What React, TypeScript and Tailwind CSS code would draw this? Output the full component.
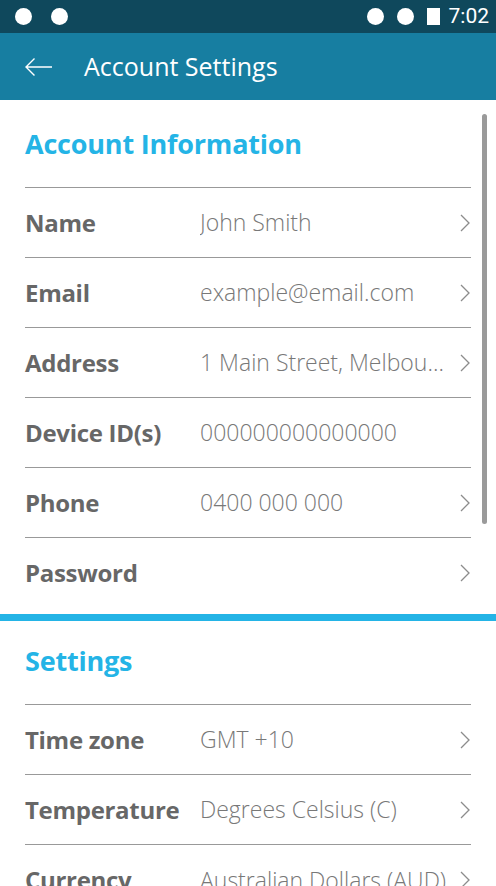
type Row = { label: string; value?: string; chevron?: boolean }

const accountRows: Row[] = [
  { label: 'Name', value: 'John Smith', chevron: true },
  { label: 'Email', value: 'example@email.com', chevron: true },
  { label: 'Address', value: '1 Main Street, Melbourne VIC 3000', chevron: true },
  { label: 'Device ID(s)', value: '000000000000000' },
  { label: 'Phone', value: '0400 000 000', chevron: true },
  { label: 'Password', chevron: true },
]

const settingsRows: Row[] = [
  { label: 'Time zone', value: 'GMT +10', chevron: true },
  { label: 'Temperature', value: 'Degrees Celsius (C)', chevron: true },
  { label: 'Currency', value: 'Australian Dollars (AUD)', chevron: true },
]

function Chevron() {
  return (
    <svg width="10" height="18" viewBox="0 0 10 18" fill="none" className="text-[#8c8c8c]">
      <path d="M1 1 L9 9 L1 17" stroke="currentColor" strokeWidth="1.3" />
    </svg>
  )
}

function SettingRow({ row, last }: { row: Row; last?: boolean }) {
  return (
    <div className={`flex h-[70px] items-center ${last ? '' : 'border-b border-[#999999]'}`}>
      <div className="w-[175px] shrink-0 text-[24px] font-bold tracking-[-0.3px] text-[#676767]">{row.label}</div>
      <div className="min-w-0 flex-1 truncate text-[23px] font-light text-[#787878]">{row.value}</div>
      <div className="flex w-[24px] shrink-0 justify-end pr-[1px]">{row.chevron && <Chevron />}</div>
    </div>
  )
}

function Section({ title, rows, top }: { title: string; rows: Row[]; top: string }) {
  return (
    <div className="px-[25px]">
      <h2 className={`flex items-end border-b border-[#999999] pb-[26px] text-[27px] font-bold leading-[34px] tracking-[-0.2px] text-[#24b4e6] ${top}`}>
        {title}
      </h2>
      {rows.map((r, i) => (
        <SettingRow key={r.label} row={r} last={i === rows.length - 1} />
      ))}
    </div>
  )
}

export default function App() {
  return (
    <div className="relative h-[886px] w-[496px] overflow-hidden bg-white font-['Open_Sans','Noto_Sans',sans-serif]">
      <div className="flex h-[33px] items-center justify-between bg-[#0f485c] pl-[15px] pr-[7px] text-white">
        <div className="flex items-center gap-[19px]">
          <span className="h-[17px] w-[17px] rounded-full bg-white" />
          <span className="h-[17px] w-[17px] rounded-full bg-white" />
        </div>
        <div className="flex items-center">
          <span className="h-[17px] w-[17px] rounded-full bg-white" />
          <span className="ml-[13px] h-[17px] w-[17px] rounded-full bg-white" />
          <span className="ml-[13px] h-[17px] w-[13px] bg-white" />
          <span className="ml-[9px] font-['Roboto',sans-serif] text-[21px] leading-none">7:02</span>
        </div>
      </div>
      <div className="flex h-[67px] items-center bg-[#177ea1] px-[25px] text-white">
        <svg width="28" height="18" viewBox="0 0 28 18" fill="none">
          <path d="M1 9 H27 M9.5 0.5 L1 9 L9.5 17.5" stroke="currentColor" strokeWidth="1.4" />
        </svg>
        <span className="ml-[31px] text-[25px] tracking-[0px]">Account Settings</span>
      </div>
      <Section title="Account Information" rows={accountRows} top="h-[88px]" />
      <div className="mt-[6px] h-[7px] bg-[#24b4e6]" />
      <Section title="Settings" rows={settingsRows} top="h-[84px]" />
      <div className="absolute right-[9px] top-[114px] h-[410px] w-[5px] rounded-full bg-[#9a9a9a]" />
    </div>
  )
}
